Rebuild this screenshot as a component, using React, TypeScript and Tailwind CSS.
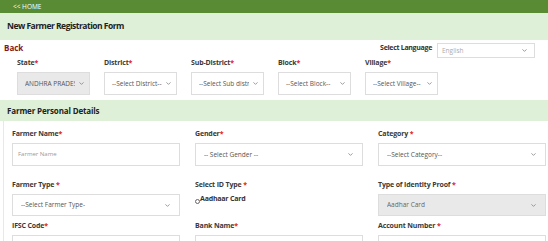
import { ChevronDown } from "lucide-react";

const LOCATIONS = [
  { label: "State", value: "ANDHRA PRADESH", disabled: true },
  { label: "District", value: "--Select District--" },
  { label: "Sub-District", value: "--Select Sub district--" },
  { label: "Block", value: "--Select Block--" },
  { label: "Village", value: "--Select Village--" },
];

function Label({ text, space }: { text: string; space?: boolean }) {
  return (
    <div className="text-[7px] font-bold text-[#3a3a3a] leading-[10px] tracking-[-0.15px] whitespace-nowrap">
      {text}
      {space ? " " : ""}
      <span className="text-[#e02020]">*</span>
    </div>
  );
}

function Select({ value, gray, className }: { value: string; gray?: boolean; className: string }) {
  return (
    <div
      className={`flex items-center border border-[#ddd] text-[6.5px] text-[#555] ${
        gray ? "bg-[#e9e9e9]" : "bg-white"
      } ${className}`}
    >
      <span className="flex-1 overflow-hidden whitespace-nowrap">{value}</span>
      <ChevronDown className="w-[7px] h-[7px] shrink-0 text-[#777]" strokeWidth={2.5} />
    </div>
  );
}

export default function App() {
  return (
    <div className="w-[548px] h-[241px] overflow-hidden bg-white font-['Open_Sans',sans-serif]">
      <div className="h-[13px] bg-[#588b34] pl-[13px] text-[6.5px] leading-[13px] text-white">&lt;&lt; HOME</div>
      <div className="h-[27px] bg-[#dff0d8] pl-[7px] flex items-center text-[8.5px] font-bold tracking-[-0.5px] text-[#222]">
        New Farmer Registration Form
      </div>

      <div className="relative h-[18px]">
        <div className="absolute left-[4px] top-[1px] text-[8px] font-bold text-[#8b1414] leading-[14px]">Back</div>
        <div className="absolute right-[13px] top-[3px] flex items-center gap-[5px]">
          <span className="text-[7px] font-bold tracking-[-0.3px] text-[#333] -mt-[4px]">Select Language</span>
          <Select value="English" className="w-[98px] h-[15px] pl-[4px] pr-[6px] text-[#aaa]" />
        </div>
      </div>

      <div className="flex gap-[14px] pl-[17px]">
        {LOCATIONS.map((l) => (
          <div key={l.label} className="w-[73px]">
            <Label text={l.label} />
            <Select
              value={l.value}
              gray={l.disabled}
              className="mt-[4px] h-[23px] pl-[7px] pr-[4px] gap-[3px]"
            />
          </div>
        ))}
      </div>

      <div className="mt-[5px] h-[21px] bg-[#dff0d8] pl-[7px] flex items-center text-[8px] font-bold tracking-[-0.15px] text-[#222]">
        Farmer Personal Details
      </div>

      <div className="ml-[3px] border-l border-[#dff0d8] pl-[8px] pt-[8px]">
        <div className="grid grid-cols-[168px_168px_168px] gap-x-[15px]">
          <div>
            <Label text="Farmer Name" />
            <div className="mt-[4px] h-[23px] border border-[#ddd] px-[5px] flex items-center text-[6px] text-[#999]">
              Farmer Name
            </div>
          </div>
          <div>
            <Label text="Gender" />
            <Select value="-- Select Gender --" className="mt-[4px] h-[23px] pl-[8px] pr-[8px]" />
          </div>
          <div>
            <Label text="Category" space />
            <Select value="--Select Category--" className="mt-[4px] h-[23px] pl-[8px] pr-[8px]" />
          </div>
        </div>

        <div className="mt-[14px] grid grid-cols-[168px_168px_168px] gap-x-[15px]">
          <div>
            <Label text="Farmer Type" space />
            <Select value="--Select Farmer Type-" className="mt-[4px] h-[22px] pl-[8px] pr-[8px]" />
          </div>
          <div>
            <Label text="Select ID Type" space />
            <div className="mt-[4px] flex items-center text-[7px] font-bold tracking-[-0.2px] text-[#333]">
              <span className="translate-y-[2px] w-[5px] h-[5px] rounded-full border border-[#666] bg-white" />
              Aadhaar Card
            </div>
          </div>
          <div>
            <Label text="Type of Identity Proof" space />
            <Select value="Aadhar Card" gray className="mt-[4px] h-[22px] pl-[8px] pr-[8px] text-[#666]" />
          </div>
        </div>

        <div className="mt-[5px] grid grid-cols-[168px_168px_168px] gap-x-[15px]">
          <div>
            <Label text="IFSC Code" />
            <div className="mt-[4px] h-[23px] border border-[#ddd]" />
          </div>
          <div>
            <Label text="Bank Name" />
            <div className="mt-[4px] h-[23px] border border-[#ddd]" />
          </div>
          <div>
            <Label text="Account Number" space />
            <div className="mt-[4px] h-[23px] border border-[#ddd]" />
          </div>
        </div>
      </div>
    </div>
  );
}
